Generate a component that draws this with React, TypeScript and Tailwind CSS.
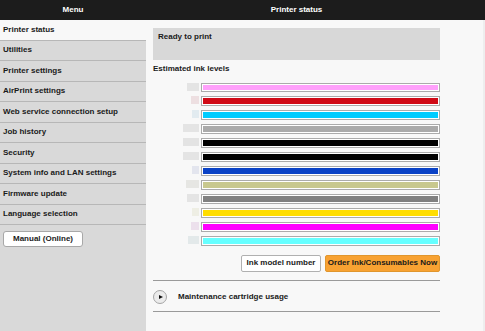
import React from "react";

const menu = [
  "Printer status",
  "Utilities",
  "Printer settings",
  "AirPrint settings",
  "Web service connection setup",
  "Job history",
  "Security",
  "System info and LAN settings",
  "Firmware update",
  "Language selection",
];

const inks: { color: string; lw: number; lc: string }[] = [
  { color: "#ffa0fb", lw: 12, lc: "#e4e4e4" },
  { color: "#d00a16", lw: 8, lc: "#eddfe1" },
  { color: "#00ccff", lw: 7, lc: "#e2ebf0" },
  { color: "#aaaaaa", lw: 16, lc: "#e4e4e4" },
  { color: "#000000", lw: 16, lc: "#e3e3e3" },
  { color: "#000000", lw: 16, lc: "#e4e4e4" },
  { color: "#0a42c6", lw: 7, lc: "#e3e5ee" },
  { color: "#c8c88e", lw: 13, lc: "#e6e6e3" },
  { color: "#808080", lw: 12, lc: "#e4e4e4" },
  { color: "#ffdd00", lw: 7, lc: "#eeeee4" },
  { color: "#ff00ff", lw: 8, lc: "#ece0ec" },
  { color: "#66ffff", lw: 11, lc: "#e3e9ea" },
];

export default function App() {
  return (
    <div className="w-[485px] h-[331px] flex flex-col overflow-hidden font-['Liberation_Sans',Arial,sans-serif] text-[8px] font-bold text-[#1a1a1a] leading-[10px]">
      <div className="flex h-[20px] shrink-0 bg-[#1c1c1c] text-white items-center">
        <div className="w-[146px] text-center">Menu</div>
        <div className="w-[301px] text-center">Printer status</div>
      </div>
      <div className="flex flex-1">
        <div className="w-[146px] bg-[#d9d9d9] flex flex-col">
          {menu.map((m, i) => (
            <div
              key={m}
              className={
                "h-[20.5px] flex items-center pl-[3px] border-b border-[#b7b7b7] " +
                (i === 0 ? "bg-[#f8f8f8]" : "")
              }
            >
              {m}
            </div>
          ))}
          <div className="pl-[3px] pt-[5.5px]">
            <div className="w-[80px] h-[16px] bg-white border border-[#a8a8a8] rounded-[3px] flex items-center justify-center">
              Manual (Online)
            </div>
          </div>
        </div>
        <div className="flex-1 bg-[#f8f8f8] flex">
          <div className="w-[301px] px-[7px] flex flex-col">
            <div className="mt-[8px] h-[32px] bg-[#d8d8d8] pl-[5px] pt-[3.5px]">Ready to print</div>
            <div className="mt-[3.5px]">Estimated ink levels</div>
            <div className="mt-[9px] flex flex-col gap-[4.3px]">
              {inks.map((ink, i) => (
                <div key={i} className="flex justify-end items-start h-[9.7px]">
                  <div
                    className="h-[8px] mr-[2px]"
                    style={{ width: ink.lw, background: ink.lc }}
                  />
                  <div className="w-[239px] h-[9.7px] border border-[#ababab] bg-white p-[1px]">
                    <div className="h-full" style={{ background: ink.color }} />
                  </div>
                </div>
              ))}
            </div>
            <div className="mt-[8.5px] flex justify-end gap-[4px]">
              <div className="w-[80px] h-[17px] bg-white border border-[#b0b0b0] rounded-[2px] flex items-center justify-center">
                Ink model number
              </div>
              <div className="w-[115px] h-[17px] bg-[#f8a232] border border-[#e0962e] rounded-[2px] flex items-center justify-center">
                Order Ink/Consumables Now
              </div>
            </div>
            <div className="mt-[8px] border-t border-[#9a9a9a] h-[32px] border-b flex items-center pt-[2px]">
              <div className="w-[14px] h-[14px] rounded-full bg-[#ebebeb] border border-[#a5a5a5] flex items-center justify-center">
                <div className="w-0 h-0 border-y-[2.5px] border-y-transparent border-l-[4px] border-l-[#111] ml-[1px]" />
              </div>
              <div className="ml-[11px]">Maintenance cartridge usage</div>
            </div>
          </div>
          <div className="flex-1" />
          <div className="w-[2px] bg-[#eeeeee]" />
        </div>
      </div>
    </div>
  );
}
